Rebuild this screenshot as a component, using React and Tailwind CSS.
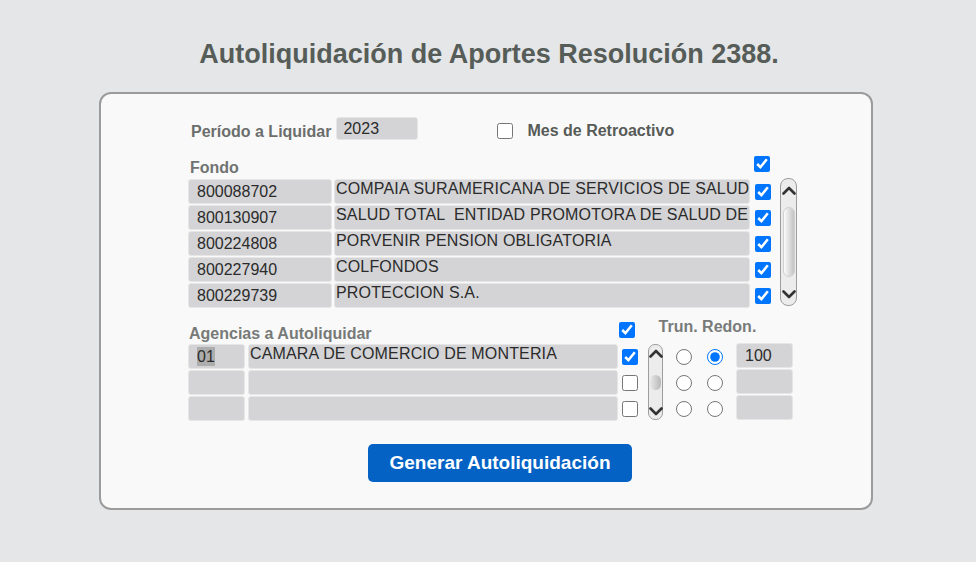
import { useState } from 'react'

const fondos = [
  { nit: '800088702', nombre: 'COMPAIA SURAMERICANA DE SERVICIOS DE SALUD' },
  { nit: '800130907', nombre: 'SALUD TOTAL  ENTIDAD PROMOTORA DE SALUD DEL REGIMEN' },
  { nit: '800224808', nombre: 'PORVENIR PENSION OBLIGATORIA' },
  { nit: '800227940', nombre: 'COLFONDOS' },
  { nit: '800229739', nombre: 'PROTECCION S.A.' },
]

const agencias = [
  { codigo: '01', nombre: 'CAMARA DE COMERCIO DE MONTERIA', activa: true, valor: '100' },
  { codigo: '', nombre: '', activa: false, valor: '' },
  { codigo: '', nombre: '', activa: false, valor: '' },
]

function Chevron({ down }) {
  return (
    <svg width="14" height="10" viewBox="0 0 14 10" className="block">
      <polyline
        points={down ? '1.5,2.5 7,8 12.5,2.5' : '1.5,8.5 7,3 12.5,8.5'}
        fill="none"
        stroke="#333"
        strokeWidth="2.6"
        strokeLinecap="round"
        strokeLinejoin="round"
      />
    </svg>
  )
}

function Box({ className = '', children }) {
  return (
    <div
      className={`h-[25px] shrink-0 overflow-hidden whitespace-pre rounded-[3px] border border-[#e6e6e6] bg-[#d4d4d6] text-[16px] text-[#2b2b2b] ${className}`}
    >
      {children}
    </div>
  )
}

function Check({ checked }) {
  const [value, setValue] = useState(checked)
  return (
    <input
      type="checkbox"
      checked={value}
      onChange={(e) => setValue(e.target.checked)}
      className="m-0 h-4 w-4 shrink-0"
    />
  )
}

export default function App() {
  const [redondeo, setRedondeo] = useState('r0')

  return (
    <div className="flex h-[562px] w-[976px] flex-col items-center bg-[#e5e6e8] font-['Liberation_Sans',Arial,sans-serif]">
      <h1 className="ml-[2px] mt-[39px] text-[27px] font-bold leading-[30px] text-[#565d58]">
        Autoliquidación de Aportes Resolución 2388.
      </h1>

      <div className="mt-[23px] ml-[-4px] h-[418px] w-[774px] rounded-[12px] border-2 border-[#9b9b9b] bg-[#f9f9f9] pl-[87px] pt-[23px]">
        {/* Periodo */}
        <div className="flex h-[23px] items-center">
          <span className="ml-[3px] mt-[6px] text-[16px] font-bold text-[#6b6e6c]">Período a Liquidar</span>
          <div className="ml-[5px] flex h-[23px] w-[82px] items-center rounded-[3px] border border-[#e6e6e6] bg-[#d4d4d6] pl-[6px] text-[16px] text-[#2b2b2b]">
            2023
          </div>
          <div className="ml-[79px] mt-[5px] flex">
            <Check checked={false} />
          </div>
          <span className="ml-[14px] mt-[4px] text-[16px] font-bold text-[#575b58]">Mes de Retroactivo</span>
        </div>

        {/* Fondo */}
        <div className="mt-[13px] flex h-[25px] w-[608px]">
          <span className="ml-[2px] self-end pb-[1px] text-[16px] font-bold leading-[18px] text-[#707371]">Fondo</span>
          <div className="ml-auto mr-[26px] mt-[2px]">
            <Check checked />
          </div>
        </div>
        <div className="mt-[1px] flex">
          <div className="flex flex-col gap-[1px]">
            {fondos.map((f) => (
              <div key={f.nit} className="flex items-center">
                <Box className="flex w-[144px] items-center pl-[8px]">{f.nit}</Box>
                <Box className="ml-[2px] w-[416px] pl-[1px] leading-[18px] tracking-[0.16px]">{f.nombre}</Box>
                <div className="ml-[5px] flex">
                  <Check checked />
                </div>
              </div>
            ))}
          </div>
          <div className="ml-[9px] mt-[-1px] flex h-[128px] w-[17px] flex-col items-center justify-between rounded-[8px] border-[1.5px] border-[#9d9d9d] bg-[#ececec] py-[6px]">
            <Chevron />
            <div className="h-[70px] w-[12px] rounded-[6px] border border-[#d0d0d0] bg-gradient-to-r from-[#fbfbfb] to-[#c4c4c4]" />
            <Chevron down />
          </div>
        </div>

        {/* Agencias */}
        <div className="mt-[12px] flex h-[24px]">
          <span className="ml-[1px] self-end pb-[1px] text-[16px] font-bold leading-[18px] text-[#777a78]">
            Agencias a Autoliquidar
          </span>
          <div className="ml-[247px] mt-[1px]">
            <Check checked />
          </div>
          <span className="ml-[24px] mt-[-2px] text-[16px] font-bold leading-[18px] text-[#787b79]">
            Trun. Redon.
          </span>
        </div>
        <div className="flex">
          <div className="flex flex-col gap-[1px]">
            {agencias.map((a, i) => (
              <div key={i} className="flex items-center">
                <Box className="flex w-[57px] items-center pl-[8px]">
                  {a.codigo && <span className="bg-[#adadad] leading-[19px]">{a.codigo}</span>}
                </Box>
                <Box className="ml-[3px] w-[370px] pl-[1px] leading-[18px] tracking-[0.16px]">{a.nombre}</Box>
                <div className="ml-[4px] flex">
                  <Check checked={a.activa} />
                </div>
              </div>
            ))}
          </div>
          <div className="ml-[10px] flex h-[76px] w-[15px] flex-col items-center justify-between rounded-[7px] border-[1.5px] border-[#9d9d9d] bg-[#ececec] py-[3px]">
            <Chevron />
            <div className="h-[15px] w-[11px] rounded-full bg-gradient-to-r from-[#e8e8e8] to-[#b8b8b8]" />
            <Chevron down />
          </div>
          <div className="ml-[13px] flex flex-col gap-[1px]">
            {agencias.map((a, i) => (
              <div key={i} className="flex h-[25px] items-center">
                <input
                  type="radio"
                  name={`ag${i}`}
                  checked={redondeo === `t${i}`}
                  onChange={() => setRedondeo(`t${i}`)}
                  className="m-0 h-4 w-4"
                />
                <input
                  type="radio"
                  name={`ag${i}`}
                  checked={redondeo === `r${i}`}
                  onChange={() => setRedondeo(`r${i}`)}
                  className="m-0 ml-[15px] h-4 w-4"
                />
                <Box className="ml-[13px] mt-[-2px] flex w-[57px] items-center pl-[8px]">{a.valor}</Box>
              </div>
            ))}
          </div>
        </div>

        <button className="ml-[180px] mt-[23px] h-[38px] w-[264px] rounded-[5px] bg-[#0562c5] text-[19px] font-bold text-white">
          Generar Autoliquidación
        </button>
      </div>
    </div>
  )
}
